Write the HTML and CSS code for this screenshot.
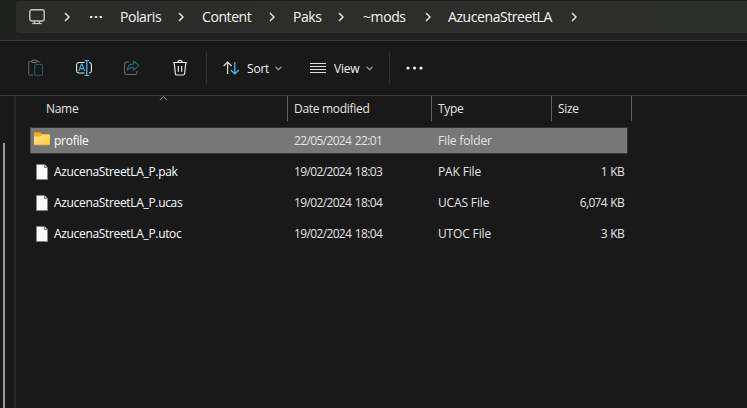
FILE: index.html
```html
<!DOCTYPE html>
<html lang="en">
<head>
<meta charset="utf-8">
<title>AzucenaStreetLA</title>
<link rel="stylesheet" href="styles.css">
</head>
<body>
<svg width="0" height="0" class="defs">
  <symbol id="chev" viewBox="0 0 6 10"><path d="M1 1l4 4-4 4" fill="none" stroke="#e4e4e2" stroke-width="1.5"/></symbol>
  <symbol id="down" viewBox="0 0 7 5"><path d="M.6.8l2.9 2.9L6.4.8" fill="none" stroke="#aaa" stroke-width="1.1"/></symbol>
  <symbol id="file" viewBox="0 0 12 16"><path d="M.5.5h8l3 3v12H.5z" fill="#fbfbfb" stroke="#858585"/><path d="M8.5.5v3h3" fill="#ddd" stroke="#777"/></symbol>
</svg>
<header class="top">
  <nav class="address">
    <svg class="pc" width="16" height="16" viewBox="0 0 16 16" fill="none" stroke="#c4c4c2"><rect x=".8" y=".8" width="14.4" height="11.2" rx="2" stroke-width="1.4"/><path d="M5.5 12v2.5M10.5 12v2.5" stroke-width="1.2"/><path d="M3.3 14.5h9.4" stroke-width="1.3"/></svg>
    <svg class="sep"><use href="#chev"/></svg>
    <svg class="dots" width="12" height="2" viewBox="0 0 12 2" fill="#e4e4e2"><path d="M0 0h2.4v2H0zM4.8 0h2.4v2H4.8zM9.6 0H12v2H9.6z"/></svg>
    <span class="crumb">Polaris</span><svg class="sep"><use href="#chev"/></svg>
    <span class="crumb">Content</span><svg class="sep"><use href="#chev"/></svg>
    <span class="crumb">Paks</span><svg class="sep"><use href="#chev"/></svg>
    <span class="crumb">~mods</span><svg class="sep"><use href="#chev"/></svg>
    <span class="crumb">AzucenaStreetLA</span><svg class="sep"><use href="#chev"/></svg>
  </nav>
</header>
<div class="toolbar">
  <svg width="16" height="18" viewBox="0 0 16 18" fill="none"><path d="M4.5 2.5H2A1.3 1.3 0 0 0 .7 3.8v11A1.3 1.3 0 0 0 2 16.1h3.2M8.5 2.5h2.2A1.3 1.3 0 0 1 12 3.7" stroke="#666"/><rect x="3.6" y="1.2" width="5.8" height="2.4" rx="1.2" stroke="#777"/><rect x="6.7" y="5.5" width="7.8" height="10.8" rx="1" stroke="#2d5369" stroke-width="1.1"/></svg>
  <svg width="16" height="18" viewBox="0 0 16 18" fill="none"><path d="M8.5 3.5H3A2.3 2.3 0 0 0 .6 5.8v5.9A2.3 2.3 0 0 0 3 14h5.5M13 3.5A2.3 2.3 0 0 1 15.4 5.8v5.9A2.3 2.3 0 0 1 13 14" stroke="#e6e6e6" stroke-width="1.1"/><path d="M2.7 12l2.8-7h.5l2.8 7M3.7 9.7h4.2" stroke="#3da9e0" stroke-width="1.2"/><path d="M10.8 1.5v15M8.5 1.5h4.6M8.5 16.5h4.6" stroke="#4cc2ff" stroke-width="1.2"/></svg>
  <svg width="16" height="18" viewBox="0 0 16 18" fill="none"><path d="M5 3H2.7A2.2 2.2 0 0 0 .5 5.2v8.1a2.2 2.2 0 0 0 2.2 2.2h8.1a2.2 2.2 0 0 0 2.2-2.2v-1.2" stroke="#666" stroke-width="1.1"/><path d="M9.5 2l5.3 4.6-5.3 4.5V8.4C6.5 8.2 5 9.1 3.4 11c.3-3.7 2.4-6 6.1-6.2z" stroke="#2d647f" stroke-width="1.2" stroke-linejoin="round"/></svg>
  <svg width="16" height="18" viewBox="0 0 16 18" fill="none" stroke="#e4e4e4" stroke-width="1.2"><path d="M.8 3.5h14.4M5.8 3.5a2.2 2.2 0 0 1 4.4 0M2.2 3.5l1.2 11.2c.1.9.6 1.3 1.4 1.3h6.4c.8 0 1.3-.4 1.4-1.3l1.2-11.2M6.4 7v5.8M9.6 7v5.8"/></svg>
  <i class="rule"></i>
  <svg width="17" height="14" viewBox="0 0 17 14" fill="none" stroke-width="1.2"><path d="M4.6 13V1M.6 5l4-4 4 4" stroke="#ddd"/><path d="M11.8 1v12M7.8 9l4 4 4-4" stroke="#4cc2ff"/></svg>
  <span class="label">Sort</span>
  <svg class="down"><use href="#down"/></svg>
  <svg width="16" height="10" viewBox="0 0 16 10" stroke="#dcdcdc"><path d="M0 .5h16M0 3.5h16M0 6.5h16M0 9.5h16"/></svg>
  <span class="label">View</span>
  <svg class="down"><use href="#down"/></svg>
  <i class="rule"></i>
  <svg width="17" height="4" viewBox="0 0 17 4" fill="#eee"><circle cx="2" cy="2" r="1.6"/><circle cx="8.5" cy="2" r="1.6"/><circle cx="15" cy="2" r="1.6"/></svg>
</div>
<main class="content">
  <aside class="side"><i class="thumb"></i></aside>
  <section class="list">
    <div class="head">
      <span class="c1">Name<svg class="up" width="9" height="5" viewBox="0 0 9 5"><path d="M.8 4.3L4.5.7l3.7 3.6" fill="none" stroke="#999"/></svg></span><span class="c2">Date modified</span><span class="c3">Type</span><span class="c4">Size</span>
    </div>
    <div class="row selected">
      <svg class="folder" width="16" height="14" viewBox="0 0 16 14"><defs><linearGradient id="g" x2="1" y2="1"><stop stop-color="#ffe59a"/><stop offset="1" stop-color="#ffc937"/></linearGradient></defs><path d="M0 1.2Q0 .2 1 .2h5.3L8 2h7q1 0 1 1v3H0z" fill="#f2ab12"/><path d="M0 4.6h6.2L8 2.8h7q1 0 1 1V12q0 1-1 1H1q-1 0-1-1z" fill="url(#g)"/><path d="M.7 13h14.6" stroke="#d9a22e" stroke-width=".7"/></svg>
      <span class="name">profile</span><span class="date">22/05/2024 22:01</span><span class="type">File folder</span><span class="size"></span>
    </div>
    <div class="row"><svg class="file"><use href="#file"/></svg><span class="name">AzucenaStreetLA_P.pak</span><span class="date">19/02/2024 18:03</span><span class="type">PAK File</span><span class="size">1 KB</span></div>
    <div class="row"><svg class="file"><use href="#file"/></svg><span class="name">AzucenaStreetLA_P.ucas</span><span class="date">19/02/2024 18:04</span><span class="type">UCAS File</span><span class="size">6,074 KB</span></div>
    <div class="row"><svg class="file"><use href="#file"/></svg><span class="name">AzucenaStreetLA_P.utoc</span><span class="date">19/02/2024 18:04</span><span class="type">UTOC File</span><span class="size">3 KB</span></div>
  </section>
</main>
</body>
</html>
```
FILE: styles.css
```css
* { box-sizing: border-box; }
body {
  margin: 0;
  width: 747px;
  height: 408px;
  overflow: hidden;
  display: flex;
  flex-direction: column;
  background: #191919;
  color: #e4e4e4;
  font: 12px/16px "Open Sans", "Noto Sans", sans-serif;
  white-space: nowrap;
}
svg { display: block; flex: none; }
.defs { position: absolute; }
.top {
  height: 41px;
  padding: 1px 0 7px 16px;
  background: #1f211c;
  border-bottom: 1px solid #3c3c3b;
}
.address {
  height: 32px;
  display: grid;
  grid-template-columns: 35px 26px 30px 58px 24px 67px 24px 45px 25px 62px 23px 123px 8px;
  align-items: center;
  padding-left: 13px;
  border-radius: 4px 0 0 4px;
  background: linear-gradient(90deg, #2c2c2b, #2d2e29 45%, #2c2e29);
  font-size: 14px;
  color: #f5f5f3;
}
.sep { width: 6px; height: 10px; }
.crumb { letter-spacing: -0.42px; }
.toolbar {
  height: 55px;
  display: grid;
  grid-template-columns: 48px 48px 48px 34px 17px 24px 28px 35px 24px 32px 23px 17px 17px;
  align-items: center;
  padding-left: 28px;
  border-bottom: 1px solid #3c3c3c;
}
.rule { width: 1px; height: 32px; background: #333; }
.label { color: #f0f0f0; letter-spacing: -0.2px; padding-top: 1px; }
.down { width: 7px; height: 5px; }
.content { flex: 1; display: flex; }
.side {
  width: 16px;
  padding: 47px 0 0 3px;
  border-right: 2px solid #282828;
}
.thumb { display: block; width: 2px; height: 100%; background: #999; }
.list { width: 615.5px; }
.head {
  height: 25px;
  display: grid;
  grid-template-columns: 272px 144px 120px 80px;
  line-height: 25px;
  margin-bottom: 6px;
  letter-spacing: -0.3px;
}
.head span { border-right: 1px solid #5e5e5e; padding-left: 6px; }
.head .c1 { position: relative; padding-left: 30px; }
.up { position: absolute; left: 143px; top: 0; }
.row {
  height: 31px;
  display: grid;
  grid-template-columns: 20px 240px 144px 108px 78px;
  align-items: center;
  padding-left: 18px;
}
.row.selected {
  width: 598px;
  height: 27px;
  margin: 0 0 2px 14px;
  background: #777;
  border: 1px solid #333;
  border-left-color: #555;
  padding-left: 3px;
}
.selected .folder { margin-top: -3px; }
.file { width: 12px; height: 16px; margin-left: 2px; }
.name { color: #fff; letter-spacing: -0.33px; }
.selected .name { letter-spacing: -0.25px; }
.date { letter-spacing: -0.64px; word-spacing: 1px; }
.type { letter-spacing: -0.15px; }
.size { text-align: right; letter-spacing: -0.65px; word-spacing: 0.7px; }
```
